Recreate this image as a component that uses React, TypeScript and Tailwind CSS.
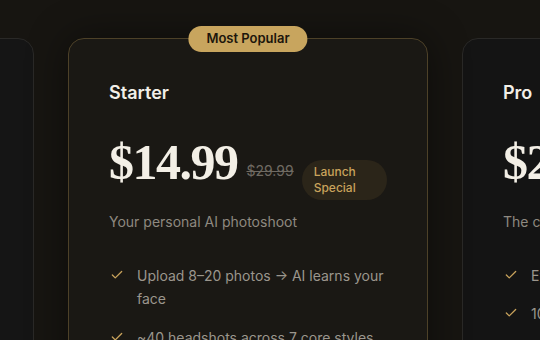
import React from "react";

const Check = () => (
  <svg width="14" height="14" viewBox="0 0 24 24" fill="none" stroke="#c9a35c" strokeWidth="2.2" strokeLinecap="round" strokeLinejoin="round" className="mt-[4px] shrink-0">
    <path d="M20 6 9 17l-5-5" />
  </svg>
);

const serif = { fontFamily: '"Liberation Serif", "DejaVu Serif", serif' } as React.CSSProperties;

function Feature({ children }: { children: React.ReactNode }) {
  return (
    <li className="flex gap-[13px] pl-[1px]">
      <Check />
      <span className="text-[14px] leading-[23px] text-[#9b968d]">{children}</span>
    </li>
  );
}

export default function App() {
  return (
    <div
      className="w-[540px] h-[340px] overflow-hidden bg-[#171511]"
      style={{ fontFamily: 'Inter, "Noto Sans", sans-serif' }}
    >
      <div className="flex gap-[34px] ml-[-326px] pt-[38px]">
        {/* left card */}
        <div className="w-[360px] h-[400px] shrink-0 rounded-[16px] border border-[#2a2927] bg-[#151515]" />

        {/* center card */}
        <div className="relative w-[360px] h-[400px] shrink-0 rounded-[16px] border border-[#4d4128] bg-[#1a1814] px-10 pt-10 shadow-[0_0_40px_rgba(0,0,0,0.45)]">
          <div className="absolute -top-[13px] left-1/2 -translate-x-1/2 h-[26px] px-[18px] rounded-full bg-[#c8a55e] flex items-center text-[13px] font-semibold text-[#1c160c] whitespace-nowrap">
            Most Popular
          </div>
          <h3 className="text-[18px] leading-7 font-semibold text-[#f2efe8]">Starter</h3>
          <div className="flex items-end mt-[30px] h-[50px]">
            <span className="text-[50px] leading-none font-bold text-[#f3efe6] tracking-[-1.5px]" style={serif}>
              $14.99
            </span>
            <span className="ml-[9px] mb-[9px] text-[14px] leading-none text-[#6f6a62] line-through">$29.99</span>
            <span className="ml-[8px] mb-[-13px] w-[86px] rounded-full bg-[#2b2519] pl-[12px] py-1 text-[12px] leading-4 font-medium text-[#c9a35c]">
              Launch
              <br />
              Special
            </span>
          </div>
          <p className="mt-[25px] text-[14px] leading-5 text-[#8e8980]">Your personal AI photoshoot</p>
          <ul className="mt-[32px] flex flex-col gap-[16px]">
            <Feature>Upload 8–20 photos → AI learns your face</Feature>
            <Feature>~40 headshots across 7 core styles</Feature>
          </ul>
        </div>

        {/* right card */}
        <div className="w-[360px] h-[400px] shrink-0 rounded-[16px] border border-[#2a2927] bg-[#141414] px-10 pt-10">
          <h3 className="text-[18px] leading-7 font-semibold text-[#f2efe8]">Pro</h3>
          <div className="flex items-end mt-[30px] h-[50px]">
            <span className="text-[50px] leading-none font-bold text-[#f3efe6] tracking-[-1.5px]" style={serif}>
              $29.99
            </span>
          </div>
          <p className="mt-[25px] text-[14px] leading-5 text-[#8e8980]">The complete AI photo studio</p>
          <ul className="mt-[32px] flex flex-col gap-[15px]">
            <Feature>Everything in Starter</Feature>
            <Feature>100 headshots across all styles</Feature>
          </ul>
        </div>
      </div>
    </div>
  );
}
